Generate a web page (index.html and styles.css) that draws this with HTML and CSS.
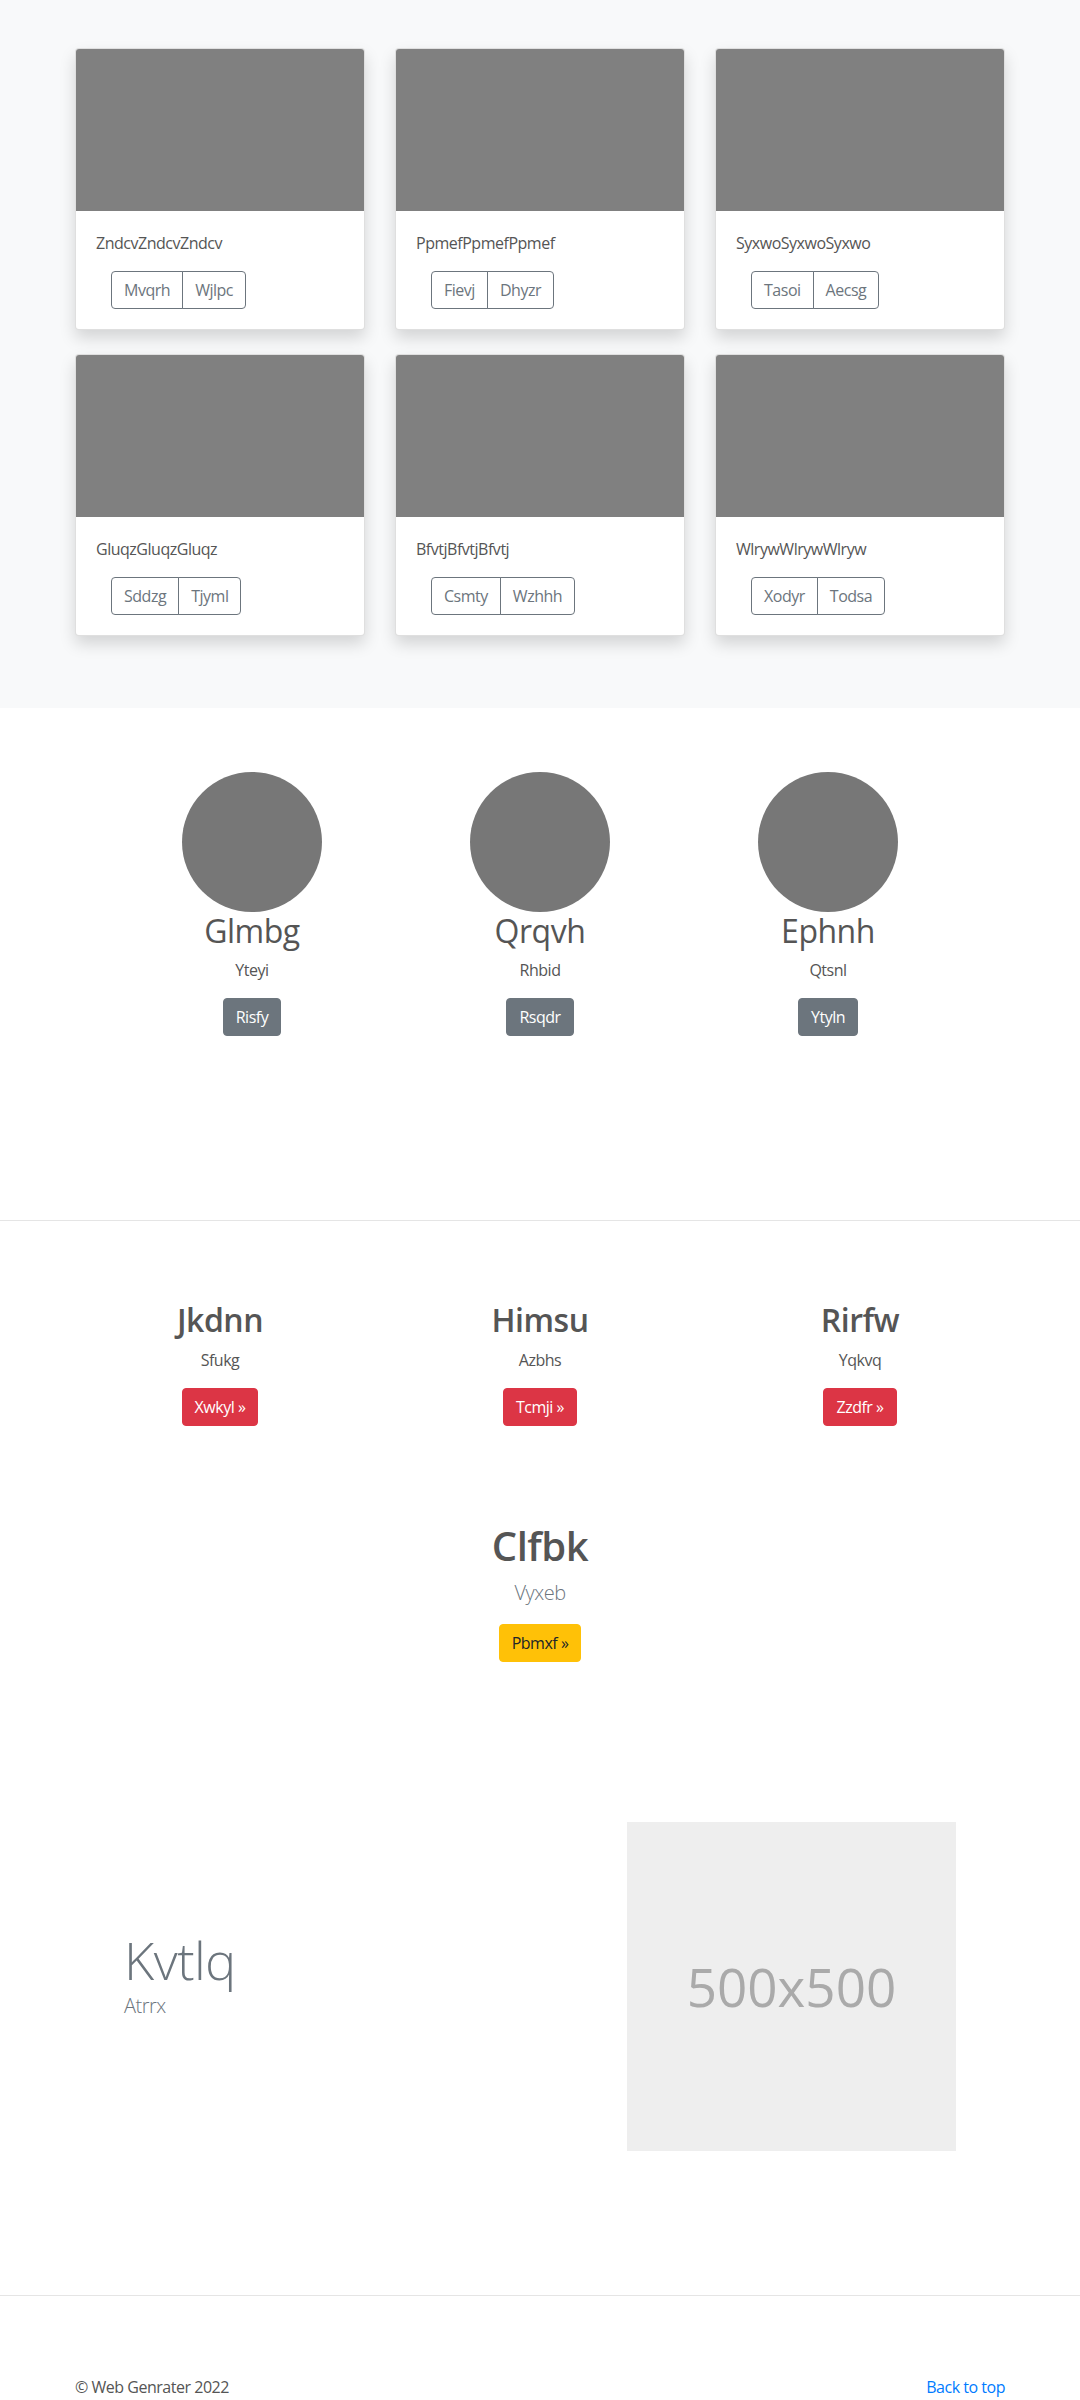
FILE: index.html
```html
<!DOCTYPE html>
<html lang="en">
<head>
<meta charset="utf-8">
<title>Album</title>
<link rel="stylesheet" href="styles.css">
</head>
<body>
<main>
  <section class="album">
    <div class="album-grid">
      <div class="card">
        <div class="thumb"></div>
        <div class="card-body">
          <p class="card-text">ZndcvZndcvZndcv</p>
          <div class="btn-group"><span class="btn-o">Mvqrh</span><span class="btn-o">Wjlpc</span></div>
        </div>
      </div>
      <div class="card">
        <div class="thumb"></div>
        <div class="card-body">
          <p class="card-text">PpmefPpmefPpmef</p>
          <div class="btn-group"><span class="btn-o">Fievj</span><span class="btn-o">Dhyzr</span></div>
        </div>
      </div>
      <div class="card">
        <div class="thumb"></div>
        <div class="card-body">
          <p class="card-text">SyxwoSyxwoSyxwo</p>
          <div class="btn-group"><span class="btn-o">Tasoi</span><span class="btn-o">Aecsg</span></div>
        </div>
      </div>
      <div class="card">
        <div class="thumb"></div>
        <div class="card-body">
          <p class="card-text">GluqzGluqzGluqz</p>
          <div class="btn-group"><span class="btn-o">Sddzg</span><span class="btn-o">Tjyml</span></div>
        </div>
      </div>
      <div class="card">
        <div class="thumb"></div>
        <div class="card-body">
          <p class="card-text">BfvtjBfvtjBfvtj</p>
          <div class="btn-group"><span class="btn-o">Csmty</span><span class="btn-o">Wzhhh</span></div>
        </div>
      </div>
      <div class="card">
        <div class="thumb"></div>
        <div class="card-body">
          <p class="card-text">WlrywWlrywWlryw</p>
          <div class="btn-group"><span class="btn-o">Xodyr</span><span class="btn-o">Todsa</span></div>
        </div>
      </div>
    </div>
  </section>

  <section class="marketing">
    <div class="marketing-grid">
      <div class="person">
        <div class="avatar"></div>
        <h2 class="person-name">Glmbg</h2>
        <p class="person-role">Yteyi</p>
        <span class="btn btn-secondary">Risfy</span>
      </div>
      <div class="person">
        <div class="avatar"></div>
        <h2 class="person-name">Qrqvh</h2>
        <p class="person-role">Rhbid</p>
        <span class="btn btn-secondary">Rsqdr</span>
      </div>
      <div class="person">
        <div class="avatar"></div>
        <h2 class="person-name">Ephnh</h2>
        <p class="person-role">Qtsnl</p>
        <span class="btn btn-secondary">Ytyln</span>
      </div>
    </div>
  </section>

  <hr class="divider">

  <section class="features">
    <div class="features-grid">
      <div class="feature">
        <h2 class="feature-title">Jkdnn</h2>
        <p class="feature-text">Sfukg</p>
        <span class="btn btn-danger">Xwkyl &raquo;</span>
      </div>
      <div class="feature">
        <h2 class="feature-title">Himsu</h2>
        <p class="feature-text">Azbhs</p>
        <span class="btn btn-danger">Tcmji &raquo;</span>
      </div>
      <div class="feature">
        <h2 class="feature-title">Rirfw</h2>
        <p class="feature-text">Yqkvq</p>
        <span class="btn btn-danger">Zzdfr &raquo;</span>
      </div>
    </div>
    <div class="highlight">
      <h1 class="highlight-title">Clfbk</h1>
      <p class="lead">Vyxeb</p>
      <span class="btn btn-warning">Pbmxf &raquo;</span>
    </div>
  </section>

  <section class="featurette">
    <div class="featurette-text">
      <h2 class="display">Kvtlq</h2>
      <p class="lead lead-left">Atrrx</p>
    </div>
    <div class="placeholder"><span>500x500</span></div>
  </section>

  <hr class="divider">

  <footer class="footer">
    <p class="copy">&copy; Web Genrater 2022</p>
    <a class="top-link" href="#">Back to top</a>
  </footer>
</main>
</body>
</html>
```

FILE: styles.css
```css
* { box-sizing: border-box; }

html, body {
  margin: 0;
  padding: 0;
  background: #fff;
}

body {
  font-family: "Open Sans", "Noto Sans", "DejaVu Sans", sans-serif;
  font-size: 16px;
  line-height: 1.5;
  color: #555;
  letter-spacing: -0.03em;
}

p { margin: 0; }
h1, h2 { margin: 0; }

/* ---------- album ---------- */
.album {
  background: #f8f9fa;
  padding: 48px 0 72px;
}

.album-grid {
  width: 930px;
  margin: 0 auto;
  display: grid;
  grid-template-columns: repeat(3, 290px);
  column-gap: 30px;
  row-gap: 24px;
}

.card {
  background: #fff;
  border: 1px solid rgba(0, 0, 0, .125);
  border-radius: 4px;
  overflow: hidden;
  box-shadow: 0 8px 16px rgba(0, 0, 0, .15);
}

.thumb {
  height: 162px;
  background: #808080;
}

.card-body {
  padding: 20px;
}

.card-text {
  margin-bottom: 16px;
  color: #555;
}

.btn-group {
  display: inline-flex;
  margin-left: 15px;
}

.btn-o {
  display: inline-block;
  padding: 6px 12px;
  line-height: 24px;
  font-size: 16px;
  color: #6c757d;
  border: 1px solid #6c757d;
}

.btn-o:first-child {
  border-radius: 4px 0 0 4px;
}

.btn-o + .btn-o {
  margin-left: -1px;
  border-radius: 0 4px 4px 0;
}

/* ---------- buttons ---------- */
.btn {
  display: inline-block;
  padding: 6px 12px;
  line-height: 24px;
  font-size: 16px;
  border: 1px solid transparent;
  border-radius: 4px;
}

.btn-secondary {
  background: #6c757d;
  border-color: #6c757d;
  color: #fff;
}

.btn-danger {
  background: #dc3545;
  border-color: #dc3545;
  color: #fff;
}

.btn-warning {
  background: #ffc107;
  border-color: #ffc107;
  color: #212529;
}

/* ---------- marketing ---------- */
.marketing {
  padding: 64px 0 184px;
}

.marketing-grid {
  display: grid;
  grid-template-columns: repeat(3, 288px);
  justify-content: center;
}

.person {
  text-align: center;
}

.avatar {
  width: 140px;
  height: 140px;
  border-radius: 50%;
  background: #777;
  margin: 0 auto;
}

.person-name {
  font-size: 32px;
  font-weight: 400;
  line-height: 1.2;
  margin-bottom: 8px;
  color: #555;
}

.person-role {
  margin-bottom: 16px;
}

.divider {
  margin: 0;
  border: 0;
  border-top: 1px solid #e5e5e5;
}

/* ---------- features ---------- */
.features {
  padding-top: 80px;
}

.features-grid {
  width: 960px;
  margin: 0 auto;
  display: grid;
  grid-template-columns: repeat(3, 320px);
}

.feature {
  text-align: center;
}

.feature-title {
  font-size: 32px;
  font-weight: 600;
  line-height: 1.2;
  margin-bottom: 8px;
  color: #555;
}

.feature-text {
  margin-bottom: 16px;
}

.highlight {
  text-align: center;
  margin-top: 96px;
}

.highlight-title {
  font-size: 40px;
  font-weight: 600;
  line-height: 1.2;
  margin-bottom: 8px;
  color: #555;
}

.lead {
  font-size: 20px;
  font-weight: 300;
  line-height: 1.5;
  color: #6c757d;
  margin-bottom: 16px;
}

/* ---------- featurette ---------- */
.featurette {
  display: flex;
  align-items: flex-start;
  padding: 160px 0 144px 124px;
}

.featurette-text {
  flex: 0 0 503px;
  padding-top: 107px;
}

.display {
  font-size: 52px;
  font-weight: 300;
  line-height: 1.2;
  color: #6c757d;
}

.lead-left {
  margin-bottom: 0;
}

.placeholder {
  width: 329px;
  height: 329px;
  background: #eee;
  display: flex;
  align-items: center;
  justify-content: center;
}

.placeholder span {
  font-size: 53px;
  color: #aaa;
  line-height: 1;
  letter-spacing: 0;
}

/* ---------- footer ---------- */
.footer {
  width: 930px;
  margin: 0 auto;
  padding: 79px 0 48px;
  display: flex;
  justify-content: space-between;
  align-items: flex-start;
}

.copy {
  color: #555;
}

.top-link {
  color: #007bff;
  text-decoration: none;
}
```
